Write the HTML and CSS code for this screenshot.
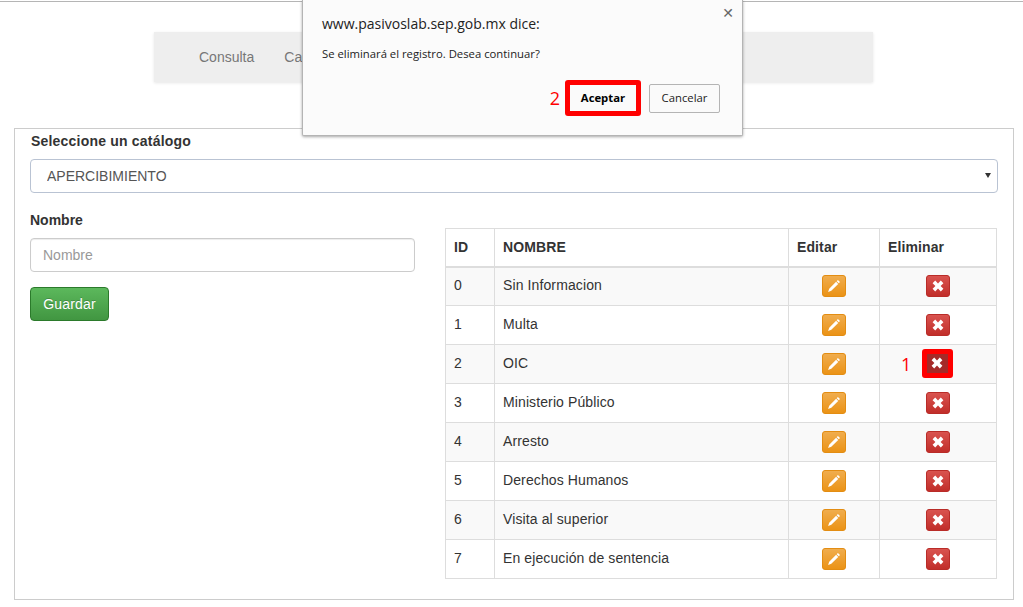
FILE: index.html
```html
<!DOCTYPE html>
<html lang="es">
<head>
<meta charset="utf-8">
<title>Catálogos</title>
<link rel="stylesheet" href="styles.css">
</head>
<body>
<div class="topline"></div>
<nav class="nav">
  <a class="nav-item">Consulta</a>
  <a class="nav-item">Catálogos</a>
  <a class="nav-item nav-salir">Salir</a>
</nav>
<main class="panel">
  <label class="lbl lbl-cat">Seleccione un catálogo</label>
  <div class="select-wrap">
    <select class="select"><option>APERCIBIMIENTO</option></select>
  </div>
  <div class="columns">
    <form class="form">
      <label class="lbl">Nombre</label>
      <input class="input" placeholder="Nombre">
      <button type="button" class="btn-save">Guardar</button>
    </form>
    <table class="table">
      <colgroup><col class="c1"><col class="c2"><col class="c3"><col class="c4"></colgroup>
      <thead><tr><th>ID</th><th>NOMBRE</th><th>Editar</th><th>Eliminar</th></tr></thead>
      <tbody id="rows">
        <tr><td>0</td><td>Sin Informacion</td><td class="ctr"><span class="ib edit"><svg viewBox="0 0 14 14"><path d="M10.9 1l2.1 2.1-1.2 1.2-2.1-2.1zM9.1 2.8l2.1 2.1-6.9 6.9-3.2 1.2 1.1-3.3z"/></svg></span></td><td class="ctr"><span class="ib del"><svg viewBox="0 0 14 14"><path d="M1.6 4.2l2.6-2.6L7 4.4l2.8-2.8 2.6 2.6L9.6 7l2.8 2.8-2.6 2.6L7 9.6l-2.8 2.8-2.6-2.6L4.4 7z"/></svg></span></td></tr>
        <tr><td>1</td><td>Multa</td><td class="ctr"><span class="ib edit"><svg viewBox="0 0 14 14"><path d="M10.9 1l2.1 2.1-1.2 1.2-2.1-2.1zM9.1 2.8l2.1 2.1-6.9 6.9-3.2 1.2 1.1-3.3z"/></svg></span></td><td class="ctr"><span class="ib del"><svg viewBox="0 0 14 14"><path d="M1.6 4.2l2.6-2.6L7 4.4l2.8-2.8 2.6 2.6L9.6 7l2.8 2.8-2.6 2.6L7 9.6l-2.8 2.8-2.6-2.6L4.4 7z"/></svg></span></td></tr>
        <tr><td>2</td><td>OIC</td><td class="ctr"><span class="ib edit"><svg viewBox="0 0 14 14"><path d="M10.9 1l2.1 2.1-1.2 1.2-2.1-2.1zM9.1 2.8l2.1 2.1-6.9 6.9-3.2 1.2 1.1-3.3z"/></svg></span></td><td class="ctr mark-cell"><span class="mark-num">1</span><span class="ib del marked"><svg viewBox="0 0 14 14"><path d="M1.6 4.2l2.6-2.6L7 4.4l2.8-2.8 2.6 2.6L9.6 7l2.8 2.8-2.6 2.6L7 9.6l-2.8 2.8-2.6-2.6L4.4 7z"/></svg></span></td></tr>
        <tr><td>3</td><td>Ministerio Público</td><td class="ctr"><span class="ib edit"><svg viewBox="0 0 14 14"><path d="M10.9 1l2.1 2.1-1.2 1.2-2.1-2.1zM9.1 2.8l2.1 2.1-6.9 6.9-3.2 1.2 1.1-3.3z"/></svg></span></td><td class="ctr"><span class="ib del"><svg viewBox="0 0 14 14"><path d="M1.6 4.2l2.6-2.6L7 4.4l2.8-2.8 2.6 2.6L9.6 7l2.8 2.8-2.6 2.6L7 9.6l-2.8 2.8-2.6-2.6L4.4 7z"/></svg></span></td></tr>
        <tr><td>4</td><td>Arresto</td><td class="ctr"><span class="ib edit"><svg viewBox="0 0 14 14"><path d="M10.9 1l2.1 2.1-1.2 1.2-2.1-2.1zM9.1 2.8l2.1 2.1-6.9 6.9-3.2 1.2 1.1-3.3z"/></svg></span></td><td class="ctr"><span class="ib del"><svg viewBox="0 0 14 14"><path d="M1.6 4.2l2.6-2.6L7 4.4l2.8-2.8 2.6 2.6L9.6 7l2.8 2.8-2.6 2.6L7 9.6l-2.8 2.8-2.6-2.6L4.4 7z"/></svg></span></td></tr>
        <tr><td>5</td><td>Derechos Humanos</td><td class="ctr"><span class="ib edit"><svg viewBox="0 0 14 14"><path d="M10.9 1l2.1 2.1-1.2 1.2-2.1-2.1zM9.1 2.8l2.1 2.1-6.9 6.9-3.2 1.2 1.1-3.3z"/></svg></span></td><td class="ctr"><span class="ib del"><svg viewBox="0 0 14 14"><path d="M1.6 4.2l2.6-2.6L7 4.4l2.8-2.8 2.6 2.6L9.6 7l2.8 2.8-2.6 2.6L7 9.6l-2.8 2.8-2.6-2.6L4.4 7z"/></svg></span></td></tr>
        <tr><td>6</td><td>Visita al superior</td><td class="ctr"><span class="ib edit"><svg viewBox="0 0 14 14"><path d="M10.9 1l2.1 2.1-1.2 1.2-2.1-2.1zM9.1 2.8l2.1 2.1-6.9 6.9-3.2 1.2 1.1-3.3z"/></svg></span></td><td class="ctr"><span class="ib del"><svg viewBox="0 0 14 14"><path d="M1.6 4.2l2.6-2.6L7 4.4l2.8-2.8 2.6 2.6L9.6 7l2.8 2.8-2.6 2.6L7 9.6l-2.8 2.8-2.6-2.6L4.4 7z"/></svg></span></td></tr>
        <tr><td>7</td><td>En ejecución de sentencia</td><td class="ctr"><span class="ib edit"><svg viewBox="0 0 14 14"><path d="M10.9 1l2.1 2.1-1.2 1.2-2.1-2.1zM9.1 2.8l2.1 2.1-6.9 6.9-3.2 1.2 1.1-3.3z"/></svg></span></td><td class="ctr"><span class="ib del"><svg viewBox="0 0 14 14"><path d="M1.6 4.2l2.6-2.6L7 4.4l2.8-2.8 2.6 2.6L9.6 7l2.8 2.8-2.6 2.6L7 9.6l-2.8 2.8-2.6-2.6L4.4 7z"/></svg></span></td></tr>
      </tbody>
    </table>
  </div>
</main>
<section class="dialog" role="dialog">
  <span class="dlg-close">✕</span>
  <h2 class="dlg-title">www.pasivoslab.sep.gob.mx dice:</h2>
  <p class="dlg-msg">Se eliminará el registro. Desea continuar?</p>
  <div class="dlg-actions">
    <span class="mark-num2">2</span>
    <button type="button" class="dlg-btn dlg-ok">Aceptar</button>
    <button type="button" class="dlg-btn dlg-cancel">Cancelar</button>
  </div>
</section>
</body>
</html>
```

FILE: styles.css
```css
* { box-sizing: border-box; }
html, body { margin: 0; padding: 0; }
body {
  width: 1023px;
  height: 607px;
  overflow: hidden;
  background: #fff;
  font-family: "Liberation Sans", Arial, sans-serif;
  font-size: 14px;
  color: #333;
  position: relative;
}
.topline { height: 2px; border-bottom: 1px solid #b5b5b5; }
.nav {
  margin: 30px 0 0 154px;
  width: 719px;
  height: 50px;
  background: #eee;
  box-shadow: 0 1px 3px rgba(0,0,0,.1);
  display: flex;
  align-items: center;
  padding-left: 45px;
  color: #777;
}
.nav-item { display: block; }
.nav-item + .nav-item { margin-left: 30px; }
.nav-salir { margin-left: auto; margin-right: 82px; }
.panel {
  margin: 46px 0 0 14px;
  width: 1000px;
  height: 472px;
  border: 1px solid #ccc;
  padding: 2px 15px 0;
}
.lbl { display: block; font-weight: bold; color: #333; line-height: 20px; }
.lbl-cat { padding-left: 1px; letter-spacing: .2px; }
.select-wrap { position: relative; margin-top: 8px; width: 968px; }
.select-wrap::after {
  content: "";
  position: absolute;
  right: 7px;
  top: 14px;
  border-left: 3.5px solid transparent;
  border-right: 3.5px solid transparent;
  border-top: 5px solid #333;
}
.select {
  display: block;
  width: 100%;
  height: 34px;
  appearance: none;
  border: 1px solid #b9c3d3;
  border-radius: 4px;
  background: #fff;
  padding: 0 16px;
  font: 14px "Liberation Sans", Arial, sans-serif;
  color: #555;
}
.columns { display: flex; margin-top: 17px; }
.form { width: 385px; margin-right: 30px; }
.input {
  display: block;
  width: 385px;
  height: 34px;
  margin-top: 8px;
  padding: 0 12px;
  border: 1px solid #ccc;
  border-radius: 4px;
  font: 14px "Liberation Sans", Arial, sans-serif;
  box-shadow: inset 0 1px 1px rgba(0,0,0,.075);
}
.input::placeholder { color: #999; opacity: 1; }
.btn-save {
  display: block;
  margin-top: 15px;
  width: 79px;
  height: 34px;
  border: 1px solid #2b7a2b;
  border-radius: 4px;
  background: linear-gradient(#5cb85c, #419641);
  color: #fff;
  font: 14px "Liberation Sans", Arial, sans-serif;
  letter-spacing: .15px;
  text-shadow: 0 -1px 0 rgba(0,0,0,.2);
  padding: 0;
}
.table {
  width: 551px;
  height: 350px;
  margin-top: 18px;
  border-collapse: collapse;
  table-layout: fixed;
  background: #fff;
  letter-spacing: .11px;
  align-self: flex-start;
}
.c1 { width: 49px; }
.c2 { width: 294px; }
.c3 { width: 91px; }
.c4 { width: 117px; }
.table th, .table td {
  border: 1px solid #ddd;
  padding: 0 8px;
  text-align: left;
  vertical-align: middle;
  height: 39px;
}
.table td { padding-bottom: 2px; }
.table th { border-bottom-width: 2px; height: 38px; }
.table tbody tr:nth-child(odd) { background: #f9f9f9; }
.table td.ctr { text-align: center; padding: 0; }
.ib {
  display: inline-flex;
  align-items: center;
  justify-content: center;
  width: 24px;
  height: 22px;
  border-radius: 3px;
  vertical-align: middle;
}
.ib svg { width: 14px; height: 14px; fill: #fff; display: block; flex: none; }
.edit { background: linear-gradient(#f0ad4e, #eb9316); border: 1px solid #e38d13; }
.del { background: linear-gradient(#d9534f, #c12e2a); border: 1px solid #b92c28; }
.mark-cell { position: relative; }
.marked { background: #a52a28; border: 5px solid #f00; border-radius: 3px; width: 31px; height: 29px; margin: -2px 1px 0 -1px; }
.mark-num { position: absolute; left: 21px; top: 7px; color: #f00; font: 18px "Open Sans", sans-serif; }
.dialog {
  position: absolute;
  left: 302px;
  top: 0;
  width: 441px;
  height: 136px;
  background: #fbfbfb;
  border: 1px solid #b4b4b4;
  border-top: 0;
  border-radius: 0 0 2px 2px;
  box-shadow: 0 1px 3px rgba(0,0,0,.35);
  padding: 0 22px 0 19px;
  color: #222;
  font-family: "Open Sans", sans-serif;
}
.dlg-close { position: absolute; right: 8px; top: 5px; font: bold 14px "DejaVu Sans", sans-serif; color: #666; }
.dlg-title { margin: 14px 0 0; font-size: 14px; font-weight: 400; line-height: 20px; }
.dlg-msg { margin: 12px 0 0; font-size: 11.3px; line-height: 16px; }
.dlg-actions { display: flex; align-items: center; justify-content: flex-end; margin-top: 18px; }
.dlg-btn {
  font: 11.3px "Open Sans", sans-serif;
  color: #222;
  background: #fafafa;
  padding: 0 0 2px;
}
.dlg-ok { width: 76px; height: 36px; font-weight: 700; color: #000; border: 5px solid #f00; border-radius: 3px; margin-right: 8px; }
.dlg-cancel { width: 71px; height: 29px; border: 1px solid #b4b4b4; border-radius: 2px; }
.mark-num2 { color: #f00; font-size: 18px; margin-right: 5px; }
```
